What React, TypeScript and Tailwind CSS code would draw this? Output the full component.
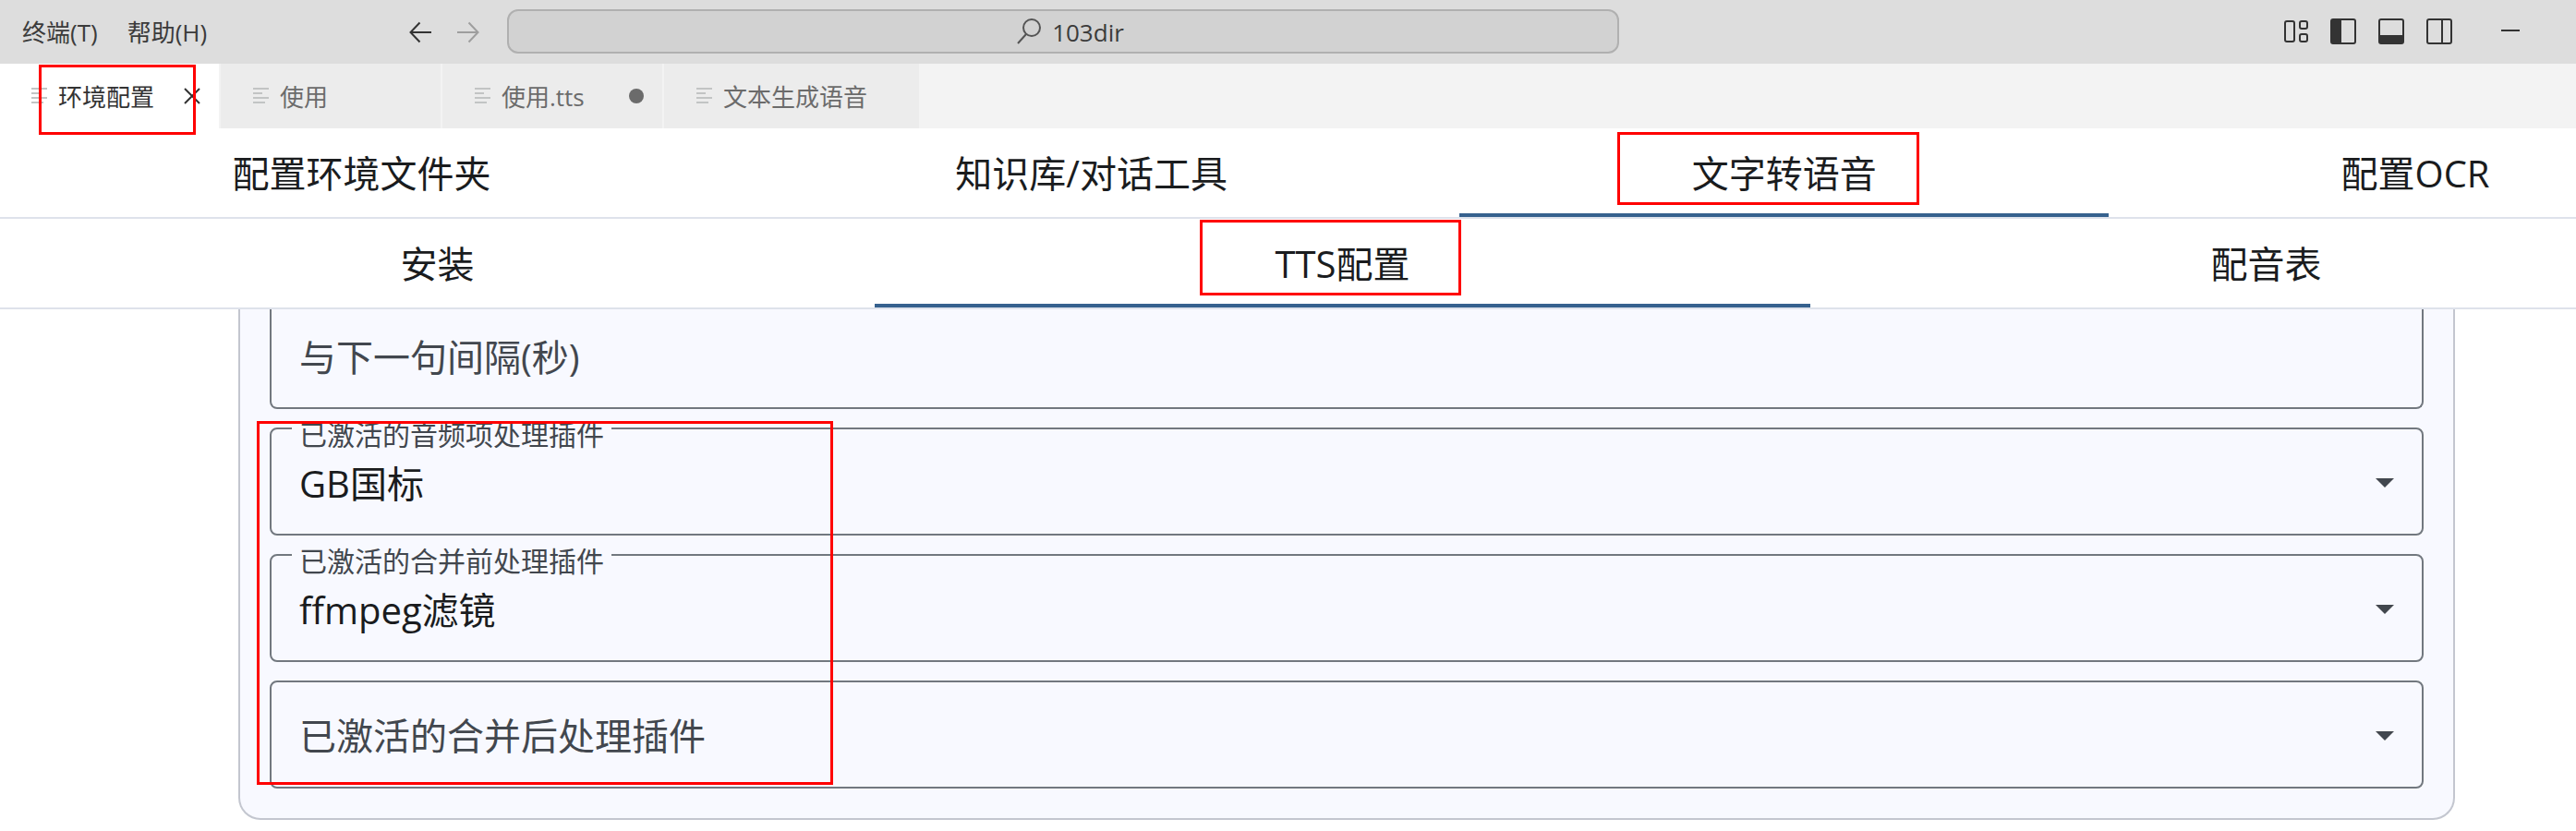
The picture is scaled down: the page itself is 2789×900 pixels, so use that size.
import { useState } from "react";
import clsx from "clsx";

const fileTabs = [
  { name: "环境配置", active: true, marked: true },
  { name: "使用" },
  { name: "使用.tts", dirty: true },
  { name: "文本生成语音" },
];

const Mark = ({ className }: { className: string }) => (
  <span
    aria-hidden="true"
    className={clsx(
      "pointer-events-none absolute z-10 border-3 border-[#ff0000]",
      className
    )}
  />
);

const FileIcon = () => (
  <svg width="18" height="20" viewBox="0 0 18 20" className="shrink-0">
    <g fill="#c2c4c4">
      <rect x="0" y="1" width="17" height="2" />
      <rect x="0" y="6" width="10" height="2" />
      <rect x="0" y="11" width="17" height="2" />
      <rect x="0" y="16" width="13" height="2" />
    </g>
  </svg>
);

const ArrowIcon = ({ flip }: { flip?: boolean }) => (
  <svg
    width="24"
    height="24"
    viewBox="0 0 24 24"
    fill="none"
    stroke="currentColor"
    strokeWidth="2"
    className={clsx(flip && "rotate-180")}
  >
    <path d="M11.5 1.5L1.5 12L11.5 22.5M1.5 12H24" />
  </svg>
);

const TitleBar = () => (
  <header className="flex h-[69px] items-center bg-[#dddddd] pr-[61px] text-[26px] text-[#3b3b3b]">
    <div className="flex w-[549px] shrink-0 items-center justify-between pr-[30px] pl-6">
      <nav className="flex gap-8 pt-0.5">
        <button type="button">终端(T)</button>
        <button type="button">帮助(H)</button>
      </nav>
      <div className="flex gap-7">
        <button type="button" aria-label="后退" className="text-[#333333]">
          <ArrowIcon />
        </button>
        <button type="button" aria-label="前进" className="text-[#9e9e9e]">
          <ArrowIcon flip />
        </button>
      </div>
    </div>
    <button
      type="button"
      className="mb-px flex h-12 w-[1204px] items-center justify-center gap-3 rounded-xl border-2 border-[#b0b0b0] bg-[#d2d2d2] pl-4"
    >
      <svg width="26" height="28" viewBox="0 0 26 28" fill="none" stroke="#555555" strokeWidth="2">
        <circle cx="16" cy="10" r="9" />
        <path d="M10 17L1 27" />
      </svg>
      <span className="pt-0.5">103dir</span>
    </button>
    <div className="mb-px ml-auto flex items-center text-[#333333]">
      <div className="flex items-center gap-6">
        <button type="button" aria-label="自定义布局">
          <svg width="26" height="28" viewBox="0 0 26 28" fill="none" stroke="currentColor" strokeWidth="2">
            <rect x="1" y="3" width="10" height="22" rx="2" />
            <rect x="17" y="3" width="8" height="8" rx="2" />
            <rect x="17" y="17" width="8" height="8" rx="2" />
          </svg>
        </button>
        <button type="button" aria-label="主侧栏">
          <svg width="28" height="28" viewBox="0 0 28 28" fill="none" stroke="currentColor" strokeWidth="2">
            <rect x="1" y="1" width="26" height="26" rx="2" />
            <path d="M2 2H12V26H2Z" fill="currentColor" stroke="none" />
          </svg>
        </button>
        <button type="button" aria-label="面板">
          <svg width="28" height="28" viewBox="0 0 28 28" fill="none" stroke="currentColor" strokeWidth="2">
            <rect x="1" y="1" width="26" height="26" rx="2" />
            <path d="M2 18H26V26H2Z" fill="currentColor" stroke="none" />
          </svg>
        </button>
        <button type="button" aria-label="辅助侧栏">
          <svg width="28" height="28" viewBox="0 0 28 28" fill="none" stroke="currentColor" strokeWidth="2">
            <rect x="1" y="1" width="26" height="26" rx="2" />
            <path d="M17 2V26" />
          </svg>
        </button>
      </div>
      <button type="button" aria-label="最小化" className="ml-[53px]">
        <svg width="20" height="28" viewBox="0 0 20 28">
          <rect y="12" width="20" height="2" fill="currentColor" />
        </svg>
      </button>
    </div>
  </header>
);

const FileTabs = () => (
  <div className="flex h-[70px] bg-[#f3f3f3] text-[26px]">
    {fileTabs.map((tab) => (
      <div
        key={tab.name}
        className={clsx(
          "relative flex min-w-60 items-center border-r-2 border-[#f3f3f3] pr-5 pl-[35px]",
          tab.active ? "-ml-px bg-white text-[#333333]" : "bg-[#ececec] text-[#6b6b6b]"
        )}
      >
        <button type="button" className="flex items-center gap-[11px]">
          <FileIcon />
          <span className="pt-0.5">{tab.name}</span>
        </button>
        {tab.active && (
          <button type="button" aria-label="关闭" className="ml-auto">
            <svg width="18" height="18" viewBox="0 0 18 18" stroke="currentColor" strokeWidth="2">
              <path d="M1 1L17 17M17 1L1 17" />
            </svg>
          </button>
        )}
        {tab.dirty && <span className="ml-auto size-4 rounded-full bg-[#6b6b6b]" />}
        {!tab.active && !tab.dirty && <span className="w-9" />}
        {tab.marked && <Mark className="top-px left-[43px] h-19 w-[170px]" />}
      </div>
    ))}
  </div>
);

const TabRow = ({
  tabs,
  initial,
  markClass,
}: {
  tabs: string[];
  initial: string;
  markClass: string;
}) => {
  const [current, setCurrent] = useState(initial);

  return (
    <div className="overflow-hidden">
      <div
        role="tablist"
        className="flex h-[98px] w-[calc(100%+158px)] border-b-2 border-[#dee2eb] text-[40px] text-[#1a1c1e]"
      >
        {tabs.map((tab) => (
          <button
            key={tab}
            type="button"
            role="tab"
            aria-selected={tab === current}
            onClick={() => setCurrent(tab)}
            className={clsx(
              "relative flex-auto border-b-4 pt-1.5 whitespace-nowrap",
              tab === current ? "border-[#36618e]" : "border-transparent"
            )}
          >
            {tab}
            {tab === initial && <Mark className={markClass} />}
          </button>
        ))}
      </div>
    </div>
  );
};

const PluginSelect = ({
  id,
  label,
  value,
}: {
  id: string;
  label: string;
  value?: string;
}) => (
  <div className="relative">
    <select
      id={id}
      defaultValue={value}
      className="block h-[117px] w-full appearance-none rounded-lg border-2 border-[#72787f] bg-transparent pt-1 pl-[30px] text-[40px] text-[#1a1c1e]"
    >
      <option>{value}</option>
    </select>
    <label
      htmlFor={id}
      className={clsx(
        "pointer-events-none absolute left-6 bg-[#f8f9ff] px-2 text-[#42474e]",
        value ? "-top-3 text-[30px] leading-10" : "top-8 text-[40px] leading-14"
      )}
    >
      {label}
    </label>
    <svg
      width="20"
      height="10"
      viewBox="0 0 20 10"
      className="pointer-events-none absolute top-[55px] right-8"
    >
      <path d="M0 0H20L10 10Z" fill="#42474e" />
    </svg>
  </div>
);

export default function App() {
  return (
    <div className="overflow-hidden bg-white font-['Open_Sans','Noto_Sans_CJK_SC',sans-serif]">
      <TitleBar />
      <FileTabs />
      <TabRow
        tabs={["配置环境文件夹", "知识库/对话工具", "文字转语音", "配置OCR"]}
        initial="文字转语音"
        markClass="top-1 right-[205px] left-[171px] h-[79px]"
      />
      <TabRow
        tabs={["安装", "TTS配置", "配音表"]}
        initial="TTS配置"
        markClass="top-px right-[378px] left-[352px] h-[82px]"
      />
      <main className="pr-[131px] pb-3 pl-[258px]">
        <form className="relative flex flex-col gap-5 rounded-b-3xl border-2 border-t-0 border-[#c3c6cf] bg-[#f8f9ff] px-8 pb-8">
          <input
            aria-label="与下一句间隔(秒)"
            placeholder="与下一句间隔(秒)"
            className="h-[108px] w-full rounded-b-lg border-2 border-t-0 border-[#72787f] bg-transparent pb-1 pl-[30px] text-[40px] placeholder:text-[#42474e]"
          />
          <PluginSelect id="item-plugin" label="已激活的音频项处理插件" value="GB国标" />
          <PluginSelect id="before-plugin" label="已激活的合并前处理插件" value="ffmpeg滤镜" />
          <PluginSelect id="after-plugin" label="已激活的合并后处理插件" />
          <Mark className="top-[121px] left-[18px] h-[394px] w-[624px]" />
        </form>
      </main>
    </div>
  );
}
